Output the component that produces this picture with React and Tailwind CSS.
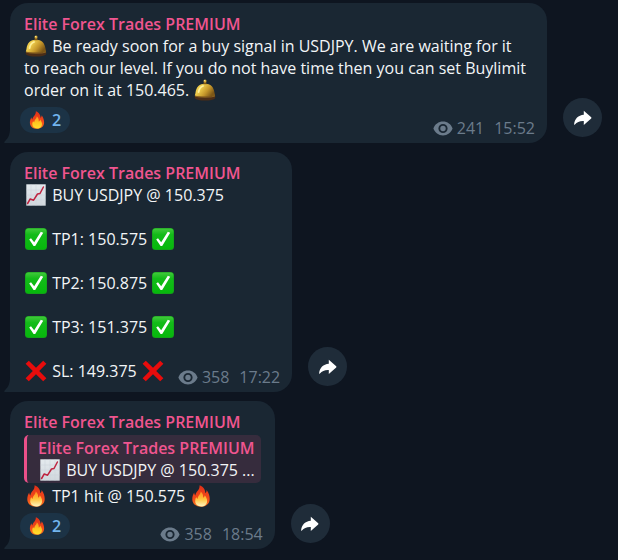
import React from "react";

const CHANNEL = "Elite Forex Trades PREMIUM";

const ANNOUNCEMENT =
  "Be ready soon for a buy signal in USDJPY. We are waiting for it to\u00a0reach our level. If you do not have time then you can set Buylimit order on it at 150.465.";

const TARGETS = [
  { label: "TP1", price: "150.575" },
  { label: "TP2", price: "150.875" },
  { label: "TP3", price: "151.375" },
];

export default function App() {
  return (
    <main className="min-h-screen bg-[#0e1520] pt-[3px] pr-4 pb-3 pl-[10px] font-['Open_Sans','Noto_Sans',sans-serif] text-base/[22px] text-[#f2f5f7]">
      <EmojiDefs />
      <div className="flex flex-col gap-[9px]">
        {/* ANNOUNCEMENT */}
        <Message>
          <p>
            <Bell /> {ANNOUNCEMENT} <Bell />
          </p>
          <div className="flex items-end justify-between gap-[13px] pt-[6px]">
            <Reaction count={2} />
            <Meta views={241} time="15:52" />
          </div>
        </Message>

        {/* SIGNAL */}
        <Message>
          <p>
            <Chart /> BUY USDJPY @ 150.375
          </p>
          {TARGETS.map((target) => (
            <p key={target.label} className="pt-[22px]">
              <Check /> {target.label}: {target.price} <Check />
            </p>
          ))}
          <div className="flex items-end justify-between gap-[13px] pt-[22px]">
            <p className="mb-[6px]">
              <Cross /> SL: 149.375 <Cross />
            </p>
            <Meta views={358} time="17:22" />
          </div>
        </Message>

        {/* RESULT */}
        <Message>
          <blockquote className="mt-[2px] mr-[2px] mb-[2px] rounded-[5px] border-l-[3px] border-[#ea5089] bg-[#362c3d] py-[2px] pr-[6px] pl-[11px]">
            <p className="font-semibold text-[#f0558f]">{CHANNEL}</p>
            <p>
              <Chart /> BUY USDJPY @ 150.375 ...
            </p>
          </blockquote>
          <p>
            <Fire /> TP1 hit @ 150.575 <Fire />
          </p>
          <div className="flex items-end justify-between gap-[13px] pt-[6px]">
            <Reaction count={2} />
            <Meta views={358} time="18:54" />
          </div>
        </Message>
      </div>
    </main>
  );
}

/* ================= MESSAGE PARTS ================= */

function Message({ children }) {
  return (
    <article className="flex items-end gap-4">
      <div className="relative max-w-[537px] rounded-[18px] rounded-bl-none bg-[#1a2733] pt-[10px] pr-3 pb-1 pl-[14px]">
        <svg
          className="absolute bottom-0 -left-[6px] h-[15px] w-[7px] text-[#1a2733]"
          viewBox="0 0 7 15"
          fill="currentColor"
          aria-hidden="true"
        >
          <path d="M7 0H6C6 6 4.6 10 .7 13.4C-.2 14.2 0 15 1.2 15H7Z" />
        </svg>
        <h2 className="font-semibold text-[#f0558f]">{CHANNEL}</h2>
        {children}
      </div>
      <button
        type="button"
        aria-label="Forward"
        className="mb-[6px] flex size-[39px] shrink-0 items-center justify-center rounded-full bg-[#1f2c39] text-white"
      >
        <svg className="h-4 w-[18px]" viewBox="0 0 18 16" fill="currentColor" aria-hidden="true">
          <path d="M9.8.7 17.2 7.3Q17.7 7.8 17.2 8.4L9.8 15V11C5.7 10.8 3 12 .9 14.6Q.1 15.2.1 14.2C.7 8.6 4.2 5.2 9.8 4.7Z" />
        </svg>
      </button>
    </article>
  );
}

function Reaction({ count }) {
  return (
    <button
      type="button"
      className="-ml-1 mb-[6px] flex h-[26px] items-center gap-[6px] rounded-full bg-[#1c3346] pr-[9px] pl-2 font-semibold text-[#72b5ee]"
    >
      <svg className="size-[18px]" viewBox="0 0 22 22" role="img" aria-label="fire">
        <FireShape core="url(#flameCoreWarm)" />
      </svg>
      {count}
    </button>
  );
}

function Meta({ views, time }) {
  return (
    <div className="flex items-center text-[#6b7b8b]">
      <svg className="mr-1 h-[15px] w-5" viewBox="0 0 20 15" fill="currentColor" aria-hidden="true">
        <path
          fillRule="evenodd"
          d="M10 .6C5.6.6 1.9 3.3.4 7.5 1.9 11.7 5.6 14.4 10 14.4s8.1-2.7 9.6-6.9C18.1 3.3 14.4.6 10 .6Zm0 11.5a4.6 4.6 0 1 1 0-9.2 4.6 4.6 0 0 1 0 9.2Z"
        />
        <circle cx="10" cy="7.5" r="2.7" />
      </svg>
      <span>{views}</span>
      <time className="ml-[10px]">{time}</time>
    </div>
  );
}

/* ================= EMOJI ================= */

function Emoji({ label, children }) {
  return (
    <svg
      className="mx-px inline-block size-[22px] align-top"
      viewBox="0 0 22 22"
      role="img"
      aria-label={label}
    >
      {children}
    </svg>
  );
}

function Bell() {
  return (
    <Emoji label="bell">
      <path d="M.8 17H21.2V19.2Q19 21.6 11 21.6T.8 19.2Z" fill="#4b2d17" />
      <path
        d="M.9 16.8C.9 15.8 1.3 15.2 1.5 13.8C2.2 8 5.4 4.8 11 4.8s8.8 3.2 9.5 9c.2 1.4.6 2 .6 3Q19 17.8 11 17.8T.9 16.8Z"
        fill="url(#bell)"
      />
      <path d="M1 17Q3 18.2 11 18.2T21 17" stroke="#8a611f" strokeWidth="1" fill="none" />
      <path
        d="M4.6 13C5 10.3 6.5 8 9 7"
        stroke="#fdf09a"
        strokeWidth="1.8"
        strokeLinecap="round"
        fill="none"
      />
      <path d="M9.9 2.8h2.2l.6 2.4H9.3Z" fill="#7d5717" />
      <circle cx="11" cy="1.9" r="1.5" fill="#d9ae3a" />
      <circle cx="10.6" cy="1.5" r=".6" fill="#fff0a0" />
    </Emoji>
  );
}

function Chart() {
  return (
    <Emoji label="chart increasing">
      <path d="M1.3.3h19.4v21.4H1.3Z" fill="url(#paper)" />
      <path
        d="M6 .5v21M11 .5v21M16 .5v21M1.5 6h19M1.5 11h19M1.5 16h19"
        stroke="#c8d1d9"
        strokeWidth=".5"
      />
      <path
        d="M2.6 19.5 5.2 15 8.6 16.2 12.5 10 15 9.5 18.4 3"
        stroke="#bf2440"
        strokeWidth="1.5"
        strokeLinejoin="round"
        strokeLinecap="round"
        fill="none"
      />
    </Emoji>
  );
}

function Check() {
  return (
    <Emoji label="check">
      <rect width="22" height="22" rx="3.5" fill="#169b1c" />
      <rect x=".6" y=".4" width="20.8" height="20.8" rx="3" fill="url(#tick)" />
      <path
        d="M4.2 11.5 6 10.2 9.2 14.3 15.8 3.8 18.2 4.8 10.2 18 8.6 18Z"
        fill="#fff"
      />
    </Emoji>
  );
}

function Cross() {
  return (
    <Emoji label="cross">
      <path
        d="M3.8.8 11 7.8 18.2.8 21.4 3.8 14.2 11l7.2 7.2-3.2 3L11 14.2l-7.2 7L.6 18.2 7.8 11 .6 3.8Z"
        fill="#e80c0c"
      />
    </Emoji>
  );
}

function Fire() {
  return (
    <Emoji label="fire">
      <FireShape core="url(#flameCore)" />
    </Emoji>
  );
}

function FireShape({ core }) {
  return (
    <>
      <path
        d="M9.6.3C14 2 15.3 5.3 15.3 8.3c1-.7 1.4-1.8 1.3-3.2 2.3 3 3.1 5.9 3.1 9 0 4.7-3.6 7.7-8.6 7.7S2.3 18.9 2.3 14.3c0-2.8.8-4.9 1.9-6.7.1 1.4.5 2.3 1.3 2.9C5.1 7 9.9 5.7 9.6.3Z"
        fill="url(#flame)"
      />
      <path
        d="M10.7 6.5c2.3 2 2.6 3.9 2.4 6.3 1-.4 1.5-1.3 1.7-2.5 1.6 2 2.3 3.9 2.3 5.6 0 3.5-2.5 5.5-5.9 5.5s-6-2-6-5.4c0-1.5.4-2.8 1.1-3.9.3 1 .8 1.5 1.5 1.7-.4-2.9 2.9-4 2.9-7.3Z"
        fill={core}
      />
    </>
  );
}

function EmojiDefs() {
  return (
    <svg className="absolute size-0" aria-hidden="true">
      <defs>
        <linearGradient id="bell" x1="0" y1="0" x2="1" y2=".5">
          <stop offset="0" stopColor="#e5bf45" />
          <stop offset=".35" stopColor="#f0cf4e" />
          <stop offset=".7" stopColor="#c4962a" />
          <stop offset="1" stopColor="#7d5717" />
        </linearGradient>
        <linearGradient id="paper" x1="0" y1="0" x2="0" y2="1">
          <stop offset="0" stopColor="#e4eaee" />
          <stop offset="1" stopColor="#d0d7dd" />
        </linearGradient>
        <linearGradient id="tick" x1="0" y1="0" x2="0" y2="1">
          <stop offset="0" stopColor="#43c93c" />
          <stop offset=".3" stopColor="#13bb19" />
          <stop offset="1" stopColor="#06b80c" />
        </linearGradient>
        <linearGradient id="flame" x1="0" y1="0" x2="0" y2="1">
          <stop offset="0" stopColor="#e02f18" />
          <stop offset=".6" stopColor="#f24a1a" />
          <stop offset="1" stopColor="#fa7a1c" />
        </linearGradient>
        <linearGradient id="flameCore" x1="0" y1="0" x2="0" y2="1">
          <stop offset="0" stopColor="#ff8a1f" />
          <stop offset=".5" stopColor="#ffc23a" />
          <stop offset="1" stopColor="#fff6c0" />
        </linearGradient>
        <linearGradient id="flameCoreWarm" x1="0" y1="0" x2="0" y2="1">
          <stop offset="0" stopColor="#ff8a1f" />
          <stop offset=".5" stopColor="#ffc61f" />
          <stop offset="1" stopColor="#ffe02e" />
        </linearGradient>
      </defs>
    </svg>
  );
}
